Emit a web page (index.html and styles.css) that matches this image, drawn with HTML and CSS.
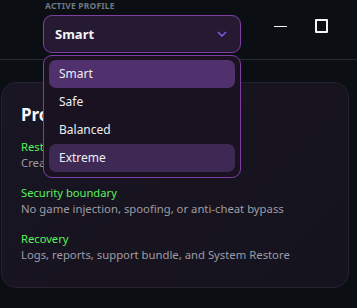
FILE: index.html
```html
<!DOCTYPE html>
<html lang="en">
<head>
  <meta charset="UTF-8">
  <meta name="viewport" content="width=device-width, initial-scale=1.0">
  <title>Active Profile</title>
  <link rel="stylesheet" href="styles.css">
</head>
<body>
  <header class="topbar">
    <div class="profile">
      <div class="profile-label">Active Profile</div>
      <button class="select">
        <span>Smart</span>
        <svg class="chevron" width="10" height="6" viewBox="0 0 10 6"><path d="M1 1l4 4 4-4" fill="none" stroke="#8b5cf6" stroke-width="1.4"/></svg>
      </button>
      <ul class="menu">
        <li class="item active">Smart</li>
        <li class="item">Safe</li>
        <li class="item">Balanced</li>
        <li class="item hover">Extreme</li>
      </ul>
    </div>
    <div class="window-controls">
      <span class="ctl-min"></span>
      <span class="ctl-max"></span>
    </div>
  </header>

  <main class="content">
    <section class="card">
      <h2>Protection</h2>
      <div class="row">
        <div class="row-title">Restore first</div>
        <div class="row-text">Creates a restore point</div>
      </div>
      <div class="row">
        <div class="row-title">Security boundary</div>
        <div class="row-text">No game injection, spoofing, or anti-cheat bypass</div>
      </div>
      <div class="row">
        <div class="row-title">Recovery</div>
        <div class="row-text">Logs, reports, support bundle, and System Restore</div>
      </div>
    </section>
  </main>
</body>
</html>
```

FILE: styles.css
```css
body {
  margin: 0;
  background: #0b0e13;
  color: #e5e7eb;
  font-family: 'Noto Sans', 'Open Sans', sans-serif;
  overflow: hidden;
}

.topbar {
  height: 59px;
  border-bottom: 1px solid #262a31;
  display: flex;
  justify-content: space-between;
  position: relative;
}

.profile {
  position: relative;
  margin-left: 43px;
  width: 198px;
}

.profile-label {
  font-size: 8.5px;
  font-weight: 700;
  letter-spacing: 0.2px;
  text-transform: uppercase;
  color: #6b7780;
  margin: 0 0 0 2px;
  line-height: 11px;
}

.select {
  margin-top: 4px;
  width: 198px;
  height: 38px;
  box-sizing: border-box;
  border: 1px solid #7d3fa6;
  border-radius: 9px;
  background: #261a33;
  color: #f3f4f6;
  font-family: inherit;
  font-size: 13px;
  font-weight: 700;
  display: flex;
  align-items: center;
  justify-content: space-between;
  padding: 0 13px 0 11px;
}

.menu {
  position: absolute;
  top: 55px;
  left: 0;
  width: 198px;
  height: 123px;
  box-sizing: border-box;
  margin: 0;
  padding: 4px 5px;
  list-style: none;
  background: #1a1220;
  border: 1px solid #7d3fa6;
  border-radius: 9px;
  z-index: 10;
}

.item {
  height: 28px;
  line-height: 28px;
  padding-left: 10px;
  border-radius: 7px;
  font-size: 12px;
  color: #eeeef2;
}

.item.active {
  background: #50306d;
}

.item.hover {
  background: #3e2955;
}

.window-controls {
  display: flex;
  align-items: center;
  gap: 28px;
  margin-right: 29px;
  height: 52px;
}

.ctl-min {
  width: 13px;
  height: 1px;
  background: #f5f5f5;
}

.ctl-max {
  width: 9px;
  height: 10px;
  border: 2px solid #f5f5f5;
  border-radius: 1px;
}

.content {
  padding: 22px 8px 0 1px;
}

.card {
  height: 206px;
  box-sizing: border-box;
  border: 1px solid #27222f;
  border-radius: 15px;
  background: linear-gradient(135deg, #191523, #15131d);
  padding: 20px 19px;
}

.card h2 {
  margin: 0 0 13px;
  font-size: 17px;
  font-weight: 700;
  color: #f5f7fb;
}

.row {
  margin-bottom: 14px;
}

.row-title {
  font-size: 11.2px;
  color: #57f25a;
  line-height: 16px;
}

.row-text {
  font-size: 11.3px;
  color: #9c9ca5;
  line-height: 16px;
}
```
